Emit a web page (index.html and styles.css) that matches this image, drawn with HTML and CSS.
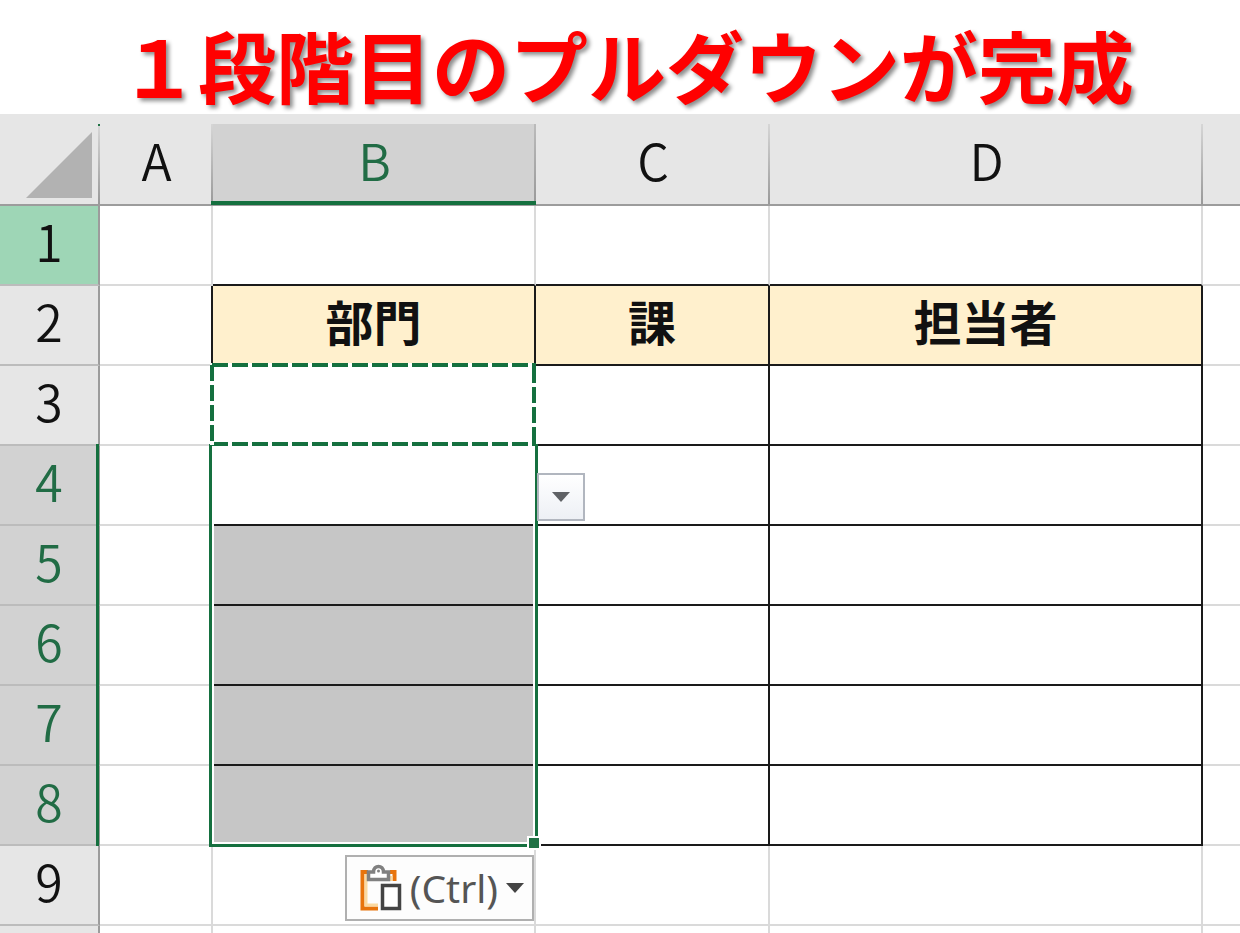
FILE: index.html
```html
<!DOCTYPE html>
<html lang="ja">
<head>
    <meta charset="UTF-8">
    <meta name="viewport" content="width=device-width, initial-scale=1.0">
    <title>１段階目のプルダウンが完成</title>
    <link rel="stylesheet" href="styles.css">
</head>
<body>
    <h1 class="title">１段階目のプルダウンが完成</h1>

    <table class="sheet">
        <colgroup>
            <col class="colHead">
            <col class="colA">
            <col class="colB">
            <col class="colC">
            <col class="colD">
            <col>
        </colgroup>
        <thead>
            <tr>
                <th class="corner">
                    <button class="selectAll" aria-label="すべて選択">
                        <svg width="66" height="66" viewBox="0 0 66 66"><path d="M66 0V66H0Z" fill="#b2b2b2"/></svg>
                    </button>
                </th>
                <th scope="col">A</th>
                <th scope="col" class="active">B</th>
                <th scope="col">C</th>
                <th scope="col">D</th>
                <th></th>
            </tr>
        </thead>
        <tbody>
            <tr>
                <th scope="row" class="current">1</th>
                <td></td>
                <td class="lineBottom"></td>
                <td class="lineBottom"></td>
                <td class="lineBottom"></td>
                <td></td>
            </tr>
            <tr>
                <th scope="row">2</th>
                <td class="lineRight"></td>
                <td class="box label">部門</td>
                <td class="box label">課</td>
                <td class="box label">担当者</td>
                <td></td>
            </tr>
            <tr>
                <th scope="row">3</th>
                <td class="lineRight"></td>
                <td class="box">
                    <!-- copied cell -->
                    <svg class="marquee">
                        <rect x="2" y="2" class="marqueeBase"/>
                        <line x1="2" y1="2" x2="100%" y2="2"/>
                        <line x1="2" y1="2" x2="2" y2="100%"/>
                        <svg x="100%" overflow="visible"><line x1="-2" y1="4" x2="-2" y2="80"/></svg>
                        <svg y="100%" overflow="visible"><line x1="4" y1="-2" x2="100%" y2="-2" stroke-dashoffset="2"/></svg>
                    </svg>
                </td>
                <td class="box"></td>
                <td class="box"></td>
                <td></td>
            </tr>
            <tr>
                <th scope="row" class="active">4</th>
                <td class="lineRight"></td>
                <td class="box">
                    <!-- selected range B4:B8 -->
                    <div class="selection"><span class="handle"></span></div>
                    <button class="dropButton" aria-label="リストを開く">
                        <svg width="18" height="10" viewBox="0 0 18 10"><path d="M0 0H18L9 10Z" fill="#606266"/></svg>
                    </button>
                </td>
                <td class="box"></td>
                <td class="box"></td>
                <td></td>
            </tr>
            <tr>
                <th scope="row" class="active">5</th>
                <td class="lineRight"></td>
                <td class="box picked"></td>
                <td class="box"></td>
                <td class="box"></td>
                <td></td>
            </tr>
            <tr>
                <th scope="row" class="active">6</th>
                <td class="lineRight"></td>
                <td class="box picked"></td>
                <td class="box"></td>
                <td class="box"></td>
                <td></td>
            </tr>
            <tr>
                <th scope="row" class="active">7</th>
                <td class="lineRight"></td>
                <td class="box picked"></td>
                <td class="box"></td>
                <td class="box"></td>
                <td></td>
            </tr>
            <tr>
                <th scope="row" class="active">8</th>
                <td class="lineRight"></td>
                <td class="box picked"></td>
                <td class="box"></td>
                <td class="box"></td>
                <td></td>
            </tr>
            <tr>
                <th scope="row">9</th>
                <td></td>
                <td>
                    <button class="pasteButton">
                        <svg width="42" height="48" viewBox="0 0 42 48">
                            <path d="M8 8H2.500V44.500H18M30 8H34.500V17" fill="none" stroke="#e8740c" stroke-width="4"/>
                            <path d="M6 10V41H18M31 12V17" fill="none" stroke="#fbd9a0" stroke-width="3"/>
                            <path d="M8.500 8H13.500C13.500 0.500 23.500 0.500 23.500 8H28.500V15.500H8.500Z" fill="#fff" stroke="#808080" stroke-width="3.500"/>
                            <circle cx="18.500" cy="7" r="1.500" fill="#808080"/>
                            <rect x="22.500" y="21.500" width="17" height="23" fill="#fff" stroke="#444" stroke-width="3.500"/>
                        </svg>
                        <span>(Ctrl)</span>
                        <svg width="18" height="10" viewBox="0 0 18 10"><path d="M0 0H18L9 10Z" fill="#444"/></svg>
                    </button>
                </td>
                <td></td>
                <td></td>
                <td></td>
            </tr>
            <tr class="cut">
                <th></th>
                <td></td>
                <td></td>
                <td></td>
                <td></td>
                <td></td>
            </tr>
        </tbody>
    </table>
</body>
</html>
```
FILE: styles.css
```css
* {
    box-sizing: border-box;
}

body {
    margin: 0;
    background-color: #fff;
    font-family: "Noto Sans CJK JP", sans-serif;
}

.title {
    margin: 0;
    padding-left: 14px;
    height: 114px;
    line-height: 128px;
    font-size: 78px;
    font-weight: 700;
    text-align: center;
    white-space: nowrap;
    color: #f00;
    text-shadow: 3px 3px 4px rgba(0, 0, 0, 0.45);
}

.sheet {
    width: 100%;
    table-layout: fixed;
    border-collapse: separate;
    border-spacing: 0;
}

.colHead {
    width: 100px;
}

.colA {
    width: 113px;
}

.colB {
    width: 323px;
}

.colC {
    width: 234px;
}

.colD {
    width: 433px;
}

.sheet th,
.sheet td {
    position: relative;
    height: 80px;
    padding: 0 0 10px;
    line-height: 48px;
    text-align: center;
    border-right: 2px solid #dadada;
    border-bottom: 2px solid #dadada;
}

.sheet th {
    font-size: 50px;
    font-weight: 350;
    color: #111;
    background-color: #e6e6e6;
}

/* column letters */
.sheet thead th {
    height: 92px;
    padding-top: 10px;
    border-right: none;
    border-bottom-color: #9c9c9c;
    background: linear-gradient(#d6d6d6, #999) right bottom / 2px 80px no-repeat #e6e6e6;
}

.sheet thead th.active {
    background: linear-gradient(#bbb, #999) right bottom / 2px 80px no-repeat,
        linear-gradient(#d2d2d2, #d2d2d2) right bottom / 100% 80px no-repeat #e6e6e6;
}

.sheet thead th.active::after {
    content: "";
    position: absolute;
    left: -2px;
    right: 0;
    bottom: -1px;
    height: 4px;
    background-color: #15703f;
}

.sheet thead .corner {
    padding: 0;
    vertical-align: bottom;
    line-height: 0;
    text-align: right;
    background: linear-gradient(#217346 2px, #d6d6d6 2px, #999) right bottom / 2px 80px no-repeat #e6e6e6;
}

.selectAll {
    padding: 0 8px 6px 0;
    border: none;
    background: none;
}

.selectAll svg {
    display: block;
}

/* row numbers */
.sheet tbody th {
    border-right-color: #9c9c9c;
    border-bottom-color: #bcbcbc;
}

.sheet tbody .current {
    background-color: #9ed6b6;
}

.sheet .active {
    color: #216c45;
    background-color: #d2d2d2;
}

.sheet tbody .active::after {
    content: "";
    position: absolute;
    top: -2px;
    right: -1px;
    bottom: -2px;
    width: 3px;
    background-color: #15703f;
}

/* ruled cells */
.sheet .box {
    border-color: #1a1a1a;
}

.sheet .lineRight {
    border-right-color: #1a1a1a;
}

.sheet .lineBottom {
    border-bottom-color: #1a1a1a;
}

.sheet .label {
    font-size: 48px;
    font-weight: 700;
    color: #111;
    background-color: #fff0cd;
}

.sheet .picked {
    background-color: #c6c6c6;
}

/* last column and last row run on past the window */
.sheet tr > :last-child {
    border-right: none;
    background-image: none;
}

.sheet .cut > * {
    height: 7px;
    padding: 0;
    border-bottom: none;
}

.marquee {
    position: absolute;
    z-index: 2;
    top: -3px;
    left: -3px;
    width: calc(100% + 5px);
    height: calc(100% + 5px);
    stroke: #15703f;
    stroke-width: 4px;
    stroke-dasharray: 16 4;
}

.marqueeBase {
    width: calc(100% - 4px);
    height: calc(100% - 4px);
    fill: none;
    stroke: #fff;
    stroke-dasharray: none;
}

.selection {
    position: absolute;
    z-index: 1;
    top: -2px;
    left: -4px;
    right: -4px;
    height: 403px;
    border: 3px solid #15703f;
    border-top: none;
    box-shadow: inset 2px 0 #fff, inset -2px 0 #fff, inset 0 -2px #fff;
}

.handle {
    position: absolute;
    right: -6px;
    bottom: -6px;
    width: 14px;
    height: 14px;
    border: 2px solid #fff;
    background-color: #217346;
}

.dropButton {
    position: absolute;
    z-index: 2;
    top: 27px;
    left: calc(100% + 3px);
    display: flex;
    align-items: center;
    justify-content: center;
    width: 48px;
    height: 48px;
    padding: 0;
    border: 2px solid #b1b6bf;
    background: linear-gradient(#fff, #edf0f5);
}

.pasteButton {
    position: absolute;
    top: 9px;
    right: 0;
    display: flex;
    align-items: center;
    gap: 8px;
    height: 66px;
    padding: 0 8px 0 13px;
    border: 2px solid #b0b0b0;
    background-color: #fdfdfd;
    font-family: "Noto Sans", sans-serif;
    font-size: 39px;
    line-height: 48px;
    color: #555;
}
```
